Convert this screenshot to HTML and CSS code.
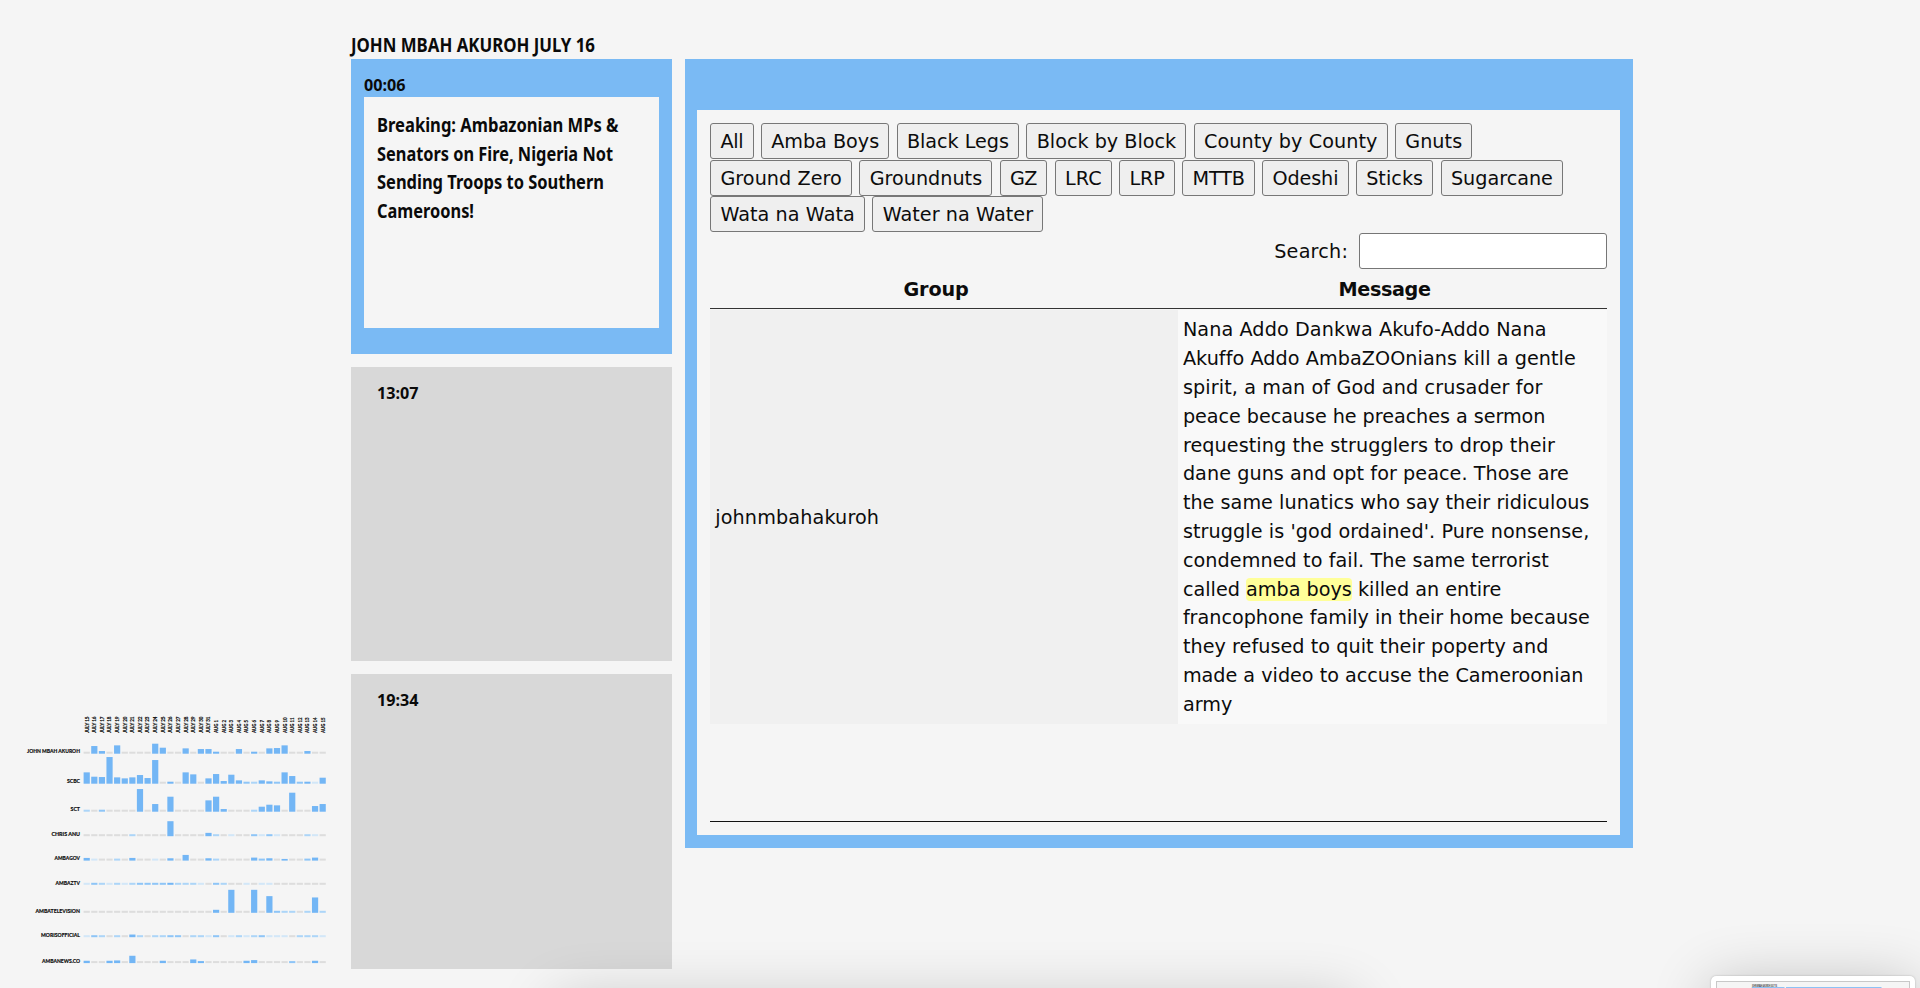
FILE: index.html
```html
<!DOCTYPE html>
<html lang="en">
<head>
<meta charset="utf-8">
<title>John Mbah Akuroh July 16</title>
<link rel="stylesheet" href="styles.css">
</head>
<body>
<div class="page">
  <aside class="overview">
    <svg class="chart" id="chart" width="340" height="270" viewBox="0 0 340 270"></svg>
  </aside>
  <main class="main">
    <h1 class="title"><span data-scale="244">JOHN MBAH AKUROH JULY 16</span></h1>
    <div class="columns">
      <section class="posts">
        <article class="post active">
          <h2 class="time"><span data-scale="41.5">00:06</span></h2>
          <div class="card">
            <div class="line"><span data-scale="241.5">Breaking: Ambazonian MPs &amp;</span></div>
            <div class="line"><span data-scale="236">Senators on Fire, Nigeria Not</span></div>
            <div class="line"><span data-scale="227">Sending Troops to Southern</span></div>
            <div class="line"><span data-scale="97">Cameroons!</span></div>
          </div>
        </article>
        <article class="post"><h2 class="time"><span data-scale="41.5">13:07</span></h2></article>
        <article class="post"><h2 class="time"><span data-scale="41.5">19:34</span></h2></article>
      </section>
      <section class="panel">
        <div class="sheet">
          <div class="filters">
            <div class="filter-row">
              <button><span data-fit="23">All</span></button>
              <button><span data-fit="108">Amba Boys</span></button>
              <button><span data-fit="102">Black Legs</span></button>
              <button><span data-fit="139.5">Block by Block</span></button>
              <button><span data-fit="173.5">County by County</span></button>
              <button><span data-fit="57">Gnuts</span></button>
            </div>
            <div class="filter-row">
              <button><span data-fit="121.5">Ground Zero</span></button>
              <button><span data-fit="112.5">Groundnuts</span></button>
              <button><span data-fit="27.2">GZ</span></button>
              <button><span data-fit="36.8">LRC</span></button>
              <button><span data-fit="35.4">LRP</span></button>
              <button><span data-fit="52">MTTB</span></button>
              <button><span data-fit="66">Odeshi</span></button>
              <button><span data-fit="57">Sticks</span></button>
              <button><span data-fit="102">Sugarcane</span></button>
            </div>
            <div class="filter-row">
              <button><span data-fit="134.5">Wata na Wata</span></button>
              <button><span data-fit="150.5">Water na Water</span></button>
            </div>
          </div>
          <label class="search"><span data-fit="74">Search:</span><input type="search"></label>
          <div class="table">
            <div class="head">
              <div class="group-head"><span data-fit="65">Group</span></div>
              <div class="message-head"><span data-fit="92">Message</span></div>
            </div>
            <div class="row">
              <div class="group"><span data-fit="164">johnmbahakuroh</span></div>
              <div class="message">
                <div class="line"><span data-fit="363.7">Nana Addo Dankwa Akufo-Addo Nana</span></div>
                <div class="line"><span data-fit="392.7">Akuffo Addo AmbaZOOnians kill a gentle</span></div>
                <div class="line"><span data-fit="359.7">spirit, a man of God and crusader for</span></div>
                <div class="line"><span data-fit="362.5">peace because he preaches a sermon</span></div>
                <div class="line"><span data-fit="372">requesting the strugglers to drop their</span></div>
                <div class="line"><span data-fit="386">dane guns and opt for peace. Those are</span></div>
                <div class="line"><span data-fit="406.5">the same lunatics who say their ridiculous</span></div>
                <div class="line"><span data-fit="406.5">struggle is 'god ordained'. Pure nonsense,</span></div>
                <div class="line"><span data-fit="366">condemned to fail. The same terrorist</span></div>
                <div class="line"><span data-fit="318.5">called <mark>amba boys</mark> killed an entire</span></div>
                <div class="line"><span data-fit="407">francophone family in their home because</span></div>
                <div class="line"><span data-fit="365.5">they refused to quit their poperty and</span></div>
                <div class="line"><span data-fit="400.5">made a video to accuse the Cameroonian</span></div>
                <div class="line"><span data-fit="49.5">army</span></div>
              </div>
            </div>
          </div>
        </div>
      </section>
    </div>
  </main>
</div>
<div class="overlays">
  <div class="dock-shadow"></div>
  <div class="preview">
    <div class="preview-page">
      <svg width="192" height="30" viewBox="0 0 192 30">
        <text class="preview-title" x="35" y="4.6" textLength="25" lengthAdjust="spacingAndGlyphs">JOHN MBAH AKUROH JULY 16</text>
        <rect class="preview-bar" x="35" y="5.2" width="32.5" height="20"/>
        <rect class="preview-bar" x="69" y="5.2" width="95.5" height="20"/>
      </svg>
    </div>
  </div>
</div>
<script src="app.js"></script>
</body>
</html>
```
FILE: styles.css
```css
* { box-sizing: border-box; }
body {
  margin: 0;
  height: 988px;
  overflow: hidden;
  position: relative;
  background: #f5f5f5;
  color: #0c0c0c;
  font-family: "DejaVu Sans", Verdana, sans-serif;
  font-size: 19.2px;
  line-height: 28.8px;
}
.page { display: flex; height: 988px; }
.overview { width: 351.3px; flex: none; display: flex; align-items: flex-end; padding-bottom: 18px; }
.chart { display: block; }
.chart text { font: 900 5.5px "Lato", sans-serif; fill: #111; stroke: #111; stroke-width: .15px; }
.bar { fill: #73b6f5; }
.bar-mid { fill: #8ec5f7; }
.bar-low { fill: #acd5f8; }
.bar-min { fill: #d2e7f8; }
.bar-none { fill: #dddddd; }

.main { padding-top: 31px; }
h1, h2 { margin: 0; font-family: "Noto Sans", sans-serif; font-weight: 700; color: #0a0a0a; }
.title { font-size: 19.4px; line-height: 28px; height: 28px; white-space: nowrap; }
[data-scale] { display: inline-block; transform-origin: 0 50%; white-space: nowrap; }
[data-fit] { display: inline-block; white-space: nowrap; }
.columns { display: flex; gap: 13px; align-items: flex-start; }

.posts { width: 320.4px; display: flex; flex-direction: column; gap: 13px; }
.post { height: 294.5px; background: #d8d8d8; padding: 13px 25.6px; }
.time { font-size: 16.4px; line-height: 25.4px; height: 25.4px; }
.post.active { background: #7abaf4; padding: 13px 12.8px; }
.card {
  height: 230.6px;
  background: #f5f5f5;
  padding: 13.5px 13px;
  font: 700 18.7px/28.8px "Noto Sans", sans-serif;
  color: #0a0a0a;
}
.line { height: 28.8px; white-space: nowrap; }

.panel { width: 948.5px; height: 788.5px; background: #7abaf4; padding: 51px 13px 13px 12.5px; }
.sheet { height: 724.5px; background: #f5f5f5; padding: 13px; display: flex; flex-direction: column; }
.filter-row { display: flex; gap: 7.4px; height: 36.5px; }
button {
  height: 36.4px;
  padding: 3px 9.2px 0;
  border: 1px solid #777;
  border-radius: 3px;
  background: #efefef;
  color: inherit;
  font: inherit;
  flex: none;
}
.search { display: flex; justify-content: flex-end; align-items: center; height: 36.8px; gap: 11px; }
.search span { padding-top: 2px; }
.search input { width: 248px; height: 36px; border: 1px solid #767676; border-radius: 3px; background: #fff; padding: 0; margin: 0; }
.table { flex: 1; border-bottom: 1px solid #111; }
.head { display: flex; height: 39.8px; padding-top: 7px; border-bottom: 1px solid #333; font-weight: 700; text-align: center; }
.group-head, .group { width: 467.7px; flex: none; }
.message-head, .message { flex: 1; }
.group-head { padding-right: 16px; }
.message-head { padding-right: 16px; }
.row { display: flex; height: 413.5px; margin-top: 1px; }
.group { background: #f0f0f0; display: flex; align-items: center; padding: 3px 0 0 5px; }
.message { background: #f9f9f9; padding: 6.4px 5px 0; }
mark { background: #ffff99; color: inherit; border-radius: 4px; }

.overlays { position: absolute; inset: 0; overflow: hidden; pointer-events: none; }
.dock-shadow {
  position: absolute;
  left: 555px;
  top: 1000px;
  width: 800px;
  height: 80px;
  box-shadow: 0 0 60px rgba(0, 0, 0, .2);
}
.preview {
  position: absolute;
  left: 1711px;
  top: 975.5px;
  width: 204px;
  height: 120px;
  padding: 5px;
  background: #fff;
  border-radius: 5px;
  box-shadow: 0 0 2px rgba(0, 0, 0, .25), 0 8px 60px rgba(0, 0, 0, .24);
}
.preview-page { border: 1px solid #c8c8c8; height: 110px; background: #f5f5f5; }
.preview-title { font: 700 2.6px "Noto Sans", sans-serif; fill: #333; }
.preview-bar { fill: #73b6f5; }
```
FILE: app.js
```js
// Each token is a bar: a height in thirds of a pixel, or g (no posts), a / b / c (very few to few posts).
const rows = [
  ["JOHN MBAH AKUROH", 53, 753.7, "g 23 8 g 25 g g g g 30 18 g g 16 g 14 14 6 g g 14 g 6 g 16 17 25 g g 8 g g"],
  ["SCBC", 13, 783.7, "34 21 20 80 19 16 19 26 17 71 g 6 g 34 28 g 16 29 8 27 10 c b 10 7 c 34 23 c 6 a 18"],
  ["SCT", 9.5, 811.7, "b g c g g g g 68 g 23 g 45 g g g g 34 45 8 g g g b 15 21 19 g 57 g g 17 23"],
  ["CHRIS ANU", 28.5, 836.2, "g g g g g g b g g g g 45 g g g g 10 b g a g g c a c a g g g b a g"],
  ["AMBAGOV", 25.5, 860.6, "8 a g g b g 8 g g a g 7 g 17 g g 7 b g g g g 9 c 7 g 5 g g c 9 g"],
  ["AMBAZTV", 24.5, 884.8, "a c b a b a b c c c c 6 b b b a g c b g g a g a a g g g g g g g"],
  ["AMBATELEVISION", 44.5, 912.8, "g g g g g g g g g g g g g g g g g 9 g 69 g g 69 g 50 c b b g b 46 b"],
  ["MORISOFFICIAL", 39, 937.2, "a c b g b g 8 b g b b c c g b b a c g a b a b c a a a g b b b a"],
  ["AMBANEWS.CO", 38, 963.1, "7 g g 7 8 g 22 g g g 7 g g g 11 6 g g g g g 7 9 g g g g c g g 7 g"]
];
const kinds = { g: "bar-none", a: "bar-min", b: "bar-low", c: "bar-mid" };
const TOP = 700, LEFT = 83.6, STEP = 7.612;
let out = "";
for (let i = 0; i < 32; i++) {
  const label = i < 17 ? "JULY " + (15 + i) : "AUG " + (i - 16);
  const len = i < 17 ? 16.5 : i < 26 ? 13 : 15.5;
  out += `<text transform="translate(${LEFT + i * STEP + 5} 33) rotate(-90)" textLength="${len}" lengthAdjust="spacingAndGlyphs">${label}</text>`;
}
for (const [name, width, base, data] of rows) {
  const y = base - TOP;
  out += `<text x="${80 - width}" y="${y - 0.3}" textLength="${width}" lengthAdjust="spacingAndGlyphs">${name}</text>`;
  data.split(" ").forEach((v, i) => {
    const h = kinds[v] ? 2 : v / 3;
    out += `<rect class="${kinds[v] || "bar"}" x="${LEFT + i * STEP}" y="${y - h}" width="6.2" height="${h}"/>`;
  });
}
document.getElementById("chart").innerHTML = out;

// Fit text to its measure by tracking or by horizontal scale.
document.querySelectorAll("[data-fit]").forEach(el => {
  const target = +el.dataset.fit;
  el.style.letterSpacing = (target - el.getBoundingClientRect().width) / el.textContent.length + "px";
});
document.querySelectorAll("[data-scale]").forEach(el => {
  el.style.transform = `scaleX(${+el.dataset.scale / el.getBoundingClientRect().width})`;
});
```
